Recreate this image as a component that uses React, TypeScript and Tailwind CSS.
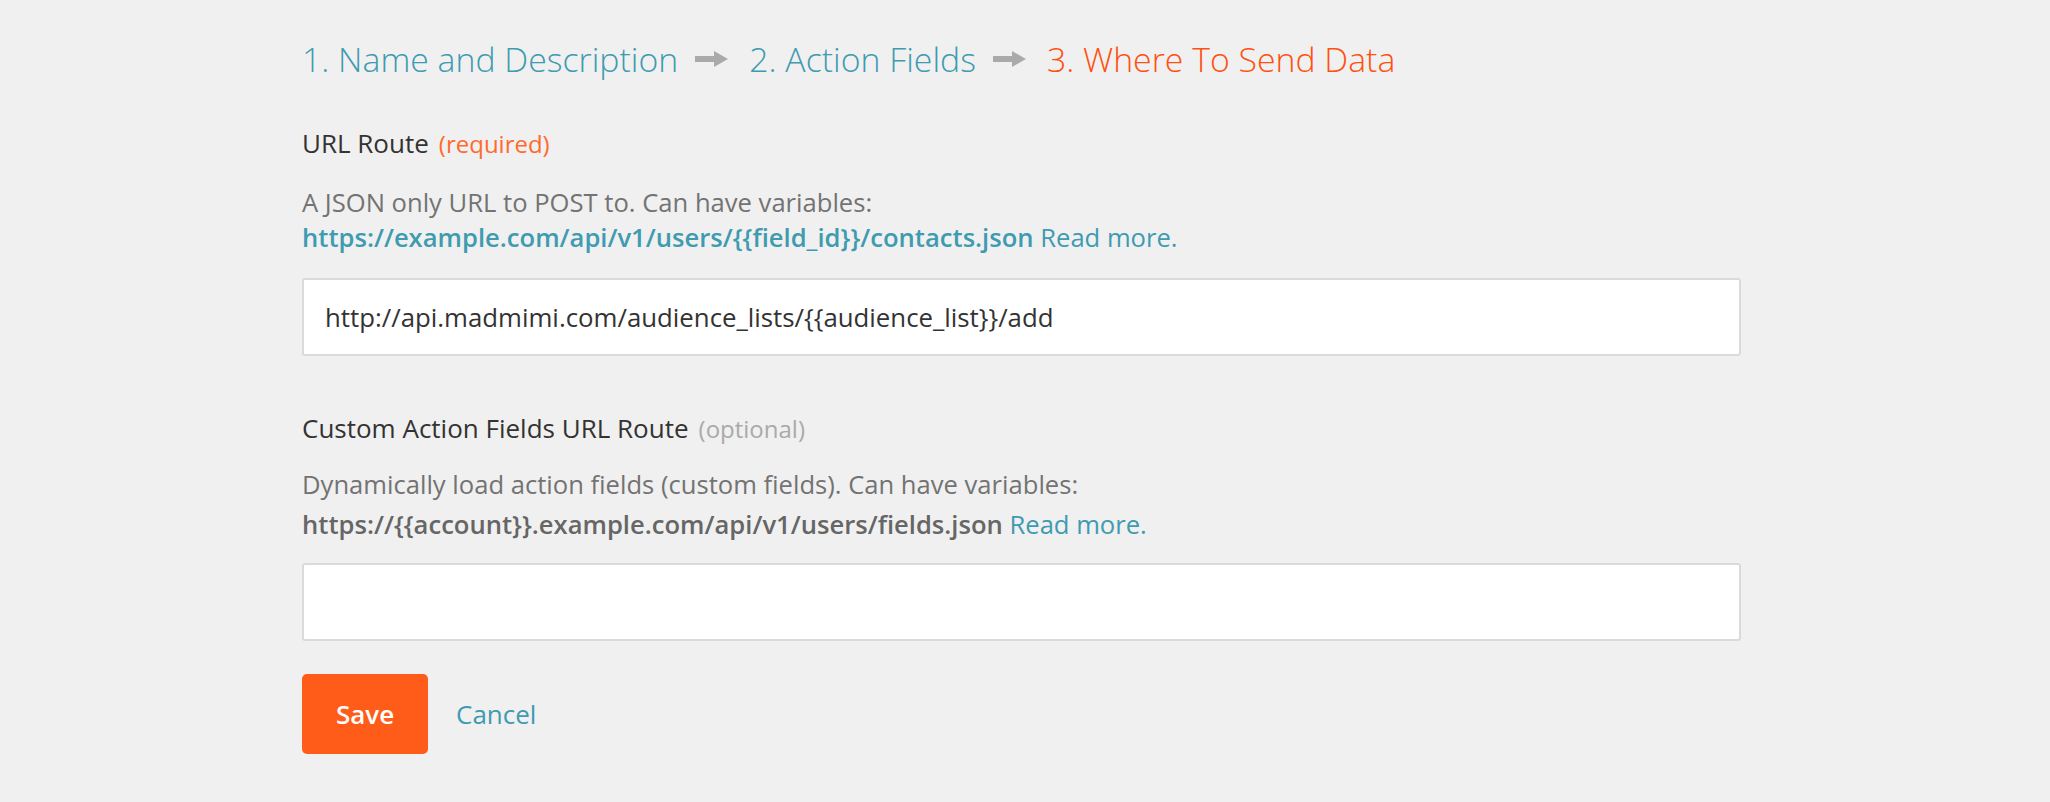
import { useState } from "react";

function StepArrow() {
  return (
    <svg width="33" height="16" viewBox="0 0 33 16" className="shrink-0">
      <rect x="0" y="5" width="21" height="6" fill="#aaaaaa" />
      <polygon points="19,0 33,8 19,16" fill="#aaaaaa" />
    </svg>
  );
}

export default function App() {
  const [route, setRoute] = useState(
    "http://api.madmimi.com/audience_lists/{{audience_list}}/add"
  );
  const [customRoute, setCustomRoute] = useState("");

  return (
    <div
      className="min-h-[802px] w-full bg-[#f0f0f0]"
      style={{ fontFamily: '"Open Sans", "Noto Sans", sans-serif' }}
    >
      <div className="ml-[302px] w-[1439px] pt-[35px]">
        {/* steps */}
        <div className="flex items-center text-[33.8px] leading-[48px] font-light">
          <span className="text-[#3e9bb0]">1. Name and Description</span>
          <span className="ml-[17px] mr-[21px] flex">
            <StepArrow />
          </span>
          <span className="text-[#3e9bb0]">2. Action Fields</span>
          <span className="ml-[17px] mr-[21px] flex">
            <StepArrow />
          </span>
          <span className="text-[#ff5011]">3. Where To Send Data</span>
        </div>

        {/* url route */}
        <div className="mt-[42px] text-[26px] leading-[36px] text-[#333]">
          URL Route
          <span className="ml-[10px] text-[24px] text-[#ff6a2e]">(required)</span>
        </div>
        <div className="mt-[23px] text-[25.6px] leading-[35px] text-[#737373]">
          <div>A JSON only URL to POST to. Can have variables:</div>
          <div className="text-[#3e9bb0]">
            <span className="font-semibold">
              https://example.com/api/v1/users/{"{{field_id}}"}/contacts.json
            </span>{" "}
            <a href="#" className="text-[#3e9bb0]">Read more.</a>
          </div>
        </div>
        <input
          value={route}
          onChange={(e) => setRoute(e.target.value)}
          className="mt-[23px] block h-[78px] w-full rounded-[3px] border-2 border-[#dadada] bg-white px-[21px] text-[25.8px] text-[#333] outline-none"
        />

        {/* custom action fields */}
        <div className="mt-[54px] text-[26px] leading-[36px] text-[#333]">
          Custom Action Fields URL Route
          <span className="ml-[10px] text-[24px] text-[#aaaaaa]">(optional)</span>
        </div>
        <div className="mt-[18px] text-[25.6px] leading-[40px] text-[#737373]">
          <div>Dynamically load action fields (custom fields). Can have variables:</div>
          <div>
            <span className="font-semibold text-[#666]">
              https://{"{{account}}"}.example.com/api/v1/users/fields.json
            </span>{" "}
            <a href="#" className="text-[#3e9bb0]">Read more.</a>
          </div>
        </div>
        <input
          value={customRoute}
          onChange={(e) => setCustomRoute(e.target.value)}
          className="mt-[18px] block h-[78px] w-full rounded-[3px] border-2 border-[#dadada] bg-white px-[21px] text-[25.8px] text-[#333] outline-none"
        />

        {/* actions */}
        <div className="mt-[33px] flex items-center gap-[28px]">
          <button className="h-[80px] w-[126px] rounded-[5px] bg-[#ff5c1a] text-[26px] font-semibold text-white">
            Save
          </button>
          <a href="#" className="text-[26px] text-[#3e9bb0]">Cancel</a>
        </div>
      </div>
    </div>
  );
}
